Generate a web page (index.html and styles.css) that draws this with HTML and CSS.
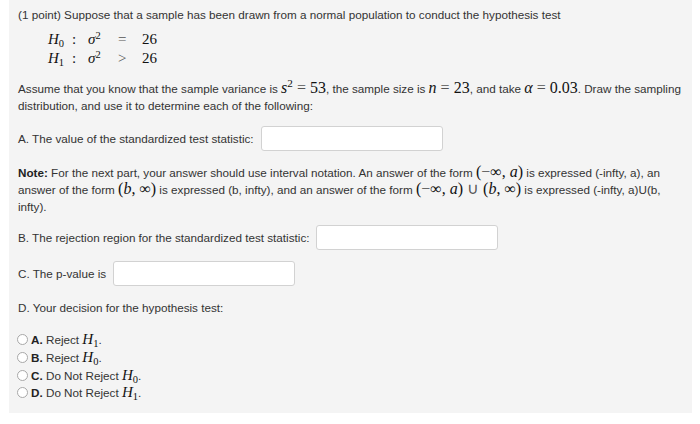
FILE: index.html
```html
<!DOCTYPE html>
<html>
<head>
<meta charset="utf-8">
<link rel="stylesheet" href="styles.css">
</head>
<body>
<div class="panel">
  <p class="intro">(1 point) Suppose that a sample has been drawn from a normal population to conduct the hypothesis test</p>
  <div class="hyp">
    <div class="hrow"><span class="hc h"><i>H</i><sub>0</sub></span><span class="hc colon">:</span><span class="hc sig"><i>σ</i><sup>2</sup></span><span class="hc op">=</span><span class="hc num">26</span></div>
    <div class="hrow"><span class="hc h"><i>H</i><sub>1</sub></span><span class="hc colon">:</span><span class="hc sig"><i>σ</i><sup>2</sup></span><span class="hc op">&gt;</span><span class="hc num">26</span></div>
  </div>
  <p class="para">Assume that you know that the sample variance is <span class="m"><i>s</i><sup>2</sup> <span class="mo">=</span> 53</span>, the sample size is <span class="m"><i>n</i> <span class="mo">=</span> 23</span>, and take <span class="m"><i>α</i> <span class="mo">=</span> 0.03</span>. Draw the sampling distribution, and use it to determine each of the following:</p>
  <div class="q qa"><span>A. The value of the standardized test statistic:</span><span class="inp"></span></div>
  <p class="para note"><b>Note:</b> For the next part, your answer should use interval notation. An answer of the form <span class="m">(<span class="mo">−</span>∞, <i>a</i>)</span> is expressed (-infty, a), an answer of the form <span class="m">(<i>b</i>, ∞)</span> is expressed (b, infty), and an answer of the form <span class="m">(<span class="mo">−</span>∞, <i>a</i>) <span class="mo">∪</span> (<i>b</i>, ∞)</span> is expressed (-infty, a)U(b, infty).</p>
  <div class="q qb"><span>B. The rejection region for the standardized test statistic:</span><span class="inp"></span></div>
  <div class="q qc"><span>C. The p-value is</span><span class="inp"></span></div>
  <p class="qd">D. Your decision for the hypothesis test:</p>
  <ul class="opts">
    <li><span class="radio"></span><span class="lbl"><b>A.</b> Reject <span class="m"><i>H</i><sub>1</sub></span>.</span></li>
    <li><span class="radio"></span><span class="lbl"><b>B.</b> Reject <span class="m"><i>H</i><sub>0</sub></span>.</span></li>
    <li><span class="radio"></span><span class="lbl"><b>C.</b> Do Not Reject <span class="m"><i>H</i><sub>0</sub></span>.</span></li>
    <li><span class="radio"></span><span class="lbl"><b>D.</b> Do Not Reject <span class="m"><i>H</i><sub>1</sub></span>.</span></li>
  </ul>
</div>
</body>
</html>
```
FILE: styles.css
```css
html, body { margin: 0; padding: 0; background: #ffffff; }
body { font-family: "Liberation Sans", Arial, sans-serif; font-size: 11.7px; color: #333; }
.panel {
  margin: 0 8px 0 9px;
  height: 413px;
  background: #f4f4f4;
  padding: 6px 0 0 9px;
  box-sizing: border-box;
}
p { margin: 0; }
.intro { line-height: 17px; }
.hyp { margin: 7px 0 0 30px; font-family: "Liberation Serif", "Times New Roman", serif; font-size: 15px; color: #111; }
.hrow { display: flex; align-items: baseline; height: 19px; line-height: 19px; }
.hc { display: inline-block; }
.h { width: 24px; }
.colon { width: 16px; }
.sig { width: 30px; }
.op { width: 24px; color: #555; }
sub, sup { font-size: 70%; line-height: 0; }
sub { vertical-align: -0.3em; }
sup { vertical-align: 0.5em; }
.hyp i, .m i { font-style: italic; }
.m { font-family: "Liberation Serif", "Times New Roman", serif; font-size: 16px; color: #111; line-height: 0; }
.mo { color: #555; }
.para { line-height: 17px; margin-top: 12px; }
.q { display: flex; align-items: center; gap: 7px; }
.qa { margin-top: 12px; }
.inp {
  display: inline-block;
  width: 182px;
  height: 25px;
  background: #fff;
  border: 1px solid #d2d2d2;
  border-radius: 3px;
  box-sizing: border-box;
}
.note { margin-top: 13px; max-width: 656px; }
.note b { font-weight: bold; color: #222; }
.qb { margin-top: 10px; }
.qc { margin-top: 11px; }
.qd { margin-top: 13px; line-height: 17px; }
.opts { list-style: none; margin: 15px 0 0 0; padding: 0; }
.opts li { display: flex; align-items: center; height: 17.7px; }
.opts .m { font-size: 15px; }
.radio {
  display: inline-block;
  flex: none;
  width: 11px; height: 11px;
  border: 1px solid #a8a8a8;
  border-radius: 50%;
  background: #fff;
  box-sizing: border-box;
  margin-right: 3px;
  margin-left: -1px;
}
.opts b { font-weight: bold; color: #222; }
```
